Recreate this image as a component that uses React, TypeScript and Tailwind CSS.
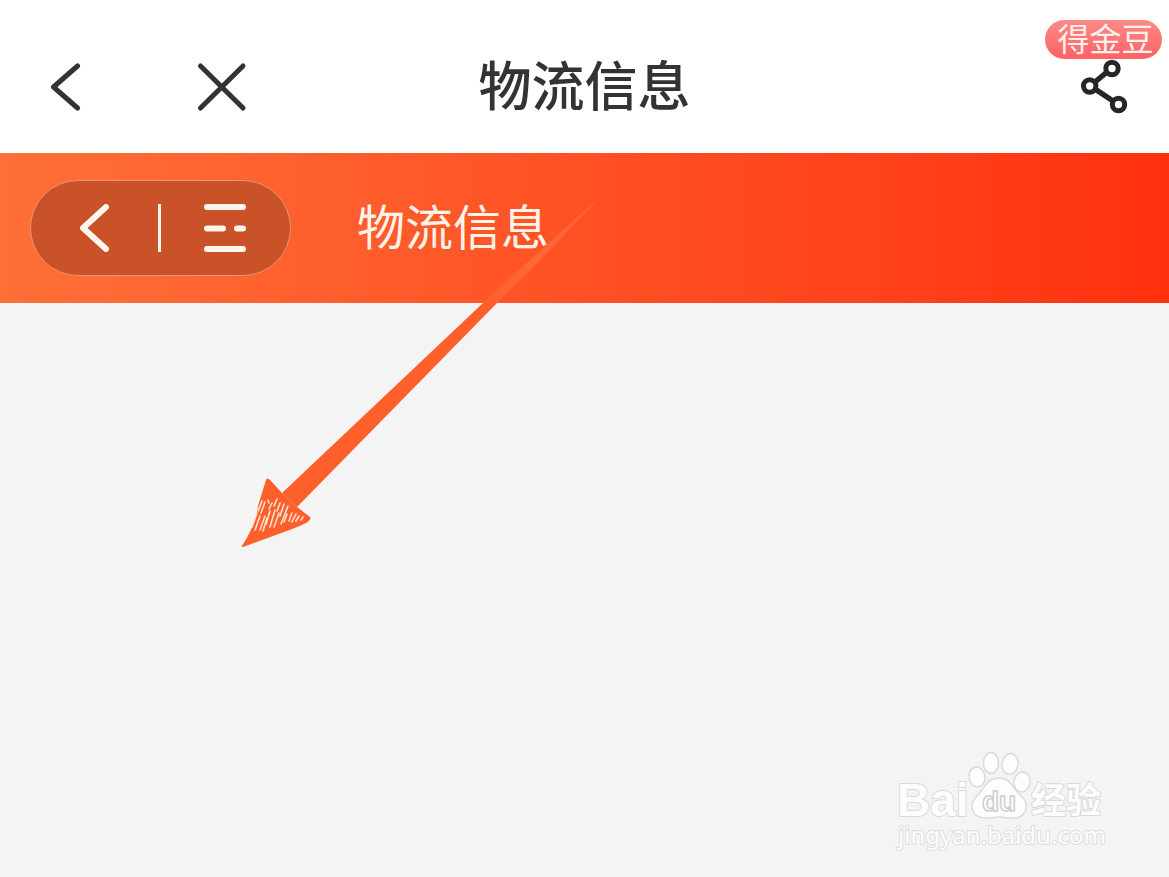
const CJK = "font-['Noto_Sans_CJK_SC',sans-serif]"

// hatch marks scratched into the arrow head: x1, y1, x2, y2
const hatches = [
  [28, 304, 29, 307],
  [22, 305, 18, 315],
  [25, 306, 21, 317],
  [32, 307, 29, 313],
  [37, 303, 34, 310],
  [40, 307, 37, 315],
  [17, 317, 12, 331],
  [20, 320, 15, 334],
  [25, 320, 20, 334],
  [30, 315, 26, 328],
  [27, 322, 23, 335],
  [35, 314, 30, 331],
  [39, 317, 34, 331],
  [44, 308, 40, 320],
  [48, 310, 41, 328],
  [47, 318, 44, 326],
  [52, 317, 49, 325],
  [56, 318, 52, 326],
  [59, 320, 56, 325],
  [63, 321, 61, 324],
]

export default function App() {
  return (
    <div className="relative min-h-screen overflow-hidden bg-[#f4f4f4]">
      <Header />
      <MiniProgramBar />
      <Arrow />
      <Watermark />
    </div>
  )
}

function Header() {
  return (
    <header className="grid h-[153px] grid-cols-3 items-center bg-white pt-5 text-[#333]">
      <div className="flex items-center gap-[108px] pl-10">
        <button type="button" aria-label="返回">
          <svg className="h-12 w-12" viewBox="0 0 48 48" fill="none" stroke="currentColor" strokeWidth="5" strokeLinecap="round">
            <path d="M37.5 3L13.5 24L37.5 45" strokeLinejoin="round" />
          </svg>
        </button>
        <button type="button" aria-label="关闭">
          <svg className="h-12 w-12 overflow-visible" viewBox="0 0 48 48" fill="none" stroke="currentColor" strokeWidth="5" strokeLinecap="round">
            <path d="M4.5 3L47 45M47 3L4.5 45" />
          </svg>
        </button>
      </div>
      <h1 className={`${CJK} pb-2 text-center text-[53px] leading-[60px] font-medium whitespace-nowrap`}>物流信息</h1>
      <div className="flex justify-end pr-10">
        <div className="relative">
          <button type="button" aria-label="分享" className="block text-[#262626]">
            <svg className="h-14 w-12" viewBox="0 0 48 56" fill="none" stroke="currentColor" strokeWidth="5">
              <path d="M26 13L14 23M14 30L32 42" strokeWidth="5.5" />
              <circle cx="31" cy="9.5" r="6.2" fill="white" />
              <circle cx="8.7" cy="27" r="6.2" fill="white" />
              <circle cx="37.500" cy="45.500" r="6.2" fill="white" />
            </svg>
          </button>
          <span
            className={`${CJK} absolute -right-[33px] bottom-full flex h-[39px] w-[117px] items-center justify-center rounded-full bg-linear-to-b from-[#fb8a86] to-[#fd6166] pb-1 pl-1 text-[32px] leading-none whitespace-nowrap text-[#fff0ec]`}
          >
            得金豆
          </span>
        </div>
      </div>
    </header>
  )
}

function MiniProgramBar() {
  return (
    <div className="flex h-[150px] items-center bg-linear-to-r from-[#ff6f38] via-[#ff5024] to-[#ff300e] pl-[30px]">
      <div className="flex h-24 w-[261px] items-center justify-between rounded-full border border-[#ea9573] bg-[#c95228] pr-11 pl-[43px] text-[#fff6ee]">
        <button type="button" aria-label="上一页">
          <svg className="h-12 w-10" viewBox="0 0 40 48" fill="none" stroke="currentColor" strokeWidth="6">
            <path d="M32 3L9 24L32 45" strokeLinecap="round" strokeLinejoin="round" />
          </svg>
        </button>
        <span className="h-12 w-[3px] bg-[#fff6ee]" />
        <button type="button" aria-label="菜单">
          <svg className="h-12 w-[42px]" viewBox="0 0 42 48" fill="none" stroke="currentColor" strokeWidth="6" strokeLinecap="round">
            <path d="M3 3H39M3 24.5H19M33 24.5H39M3 45H39" />
          </svg>
        </button>
      </div>
      <h2 className={`${CJK} ml-[66px] pb-2 text-[48px] leading-[60px] whitespace-nowrap text-[#fff2e8]`}>物流信息</h2>
    </div>
  )
}

function Arrow() {
  return (
    <svg
      className="pointer-events-none absolute top-[196px] left-60 h-[352px] w-[362px]"
      viewBox="0 0 362 352"
      aria-hidden="true"
    >
      <defs>
        <linearGradient id="shaft" gradientUnits="userSpaceOnUse" x1="360" y1="1" x2="250" y2="108">
          <stop offset="0" stopColor="#ff6d40" stopOpacity="0.6" />
          <stop offset="0.6" stopColor="#ff6836" />
          <stop offset="1" stopColor="#ff602b" />
        </linearGradient>
      </defs>
      <path d="M360 1Q305 50 243 107L42 297L57 311L257 107Q315 50 360 1Z" fill="url(#shaft)" />
      <path
        d="M1.500 350.500Q15 331 18 310L26 284Q27 281 30 284L42 297L57 311L70 321Q72 324 64 328Q56 332 33 340L3 351Z"
        fill="#ff602b"
      />
      <g stroke="#ffe0cc" strokeWidth="1.6" strokeLinecap="round">
        {hatches.map(([x1, y1, x2, y2]) => (
          <line key={`${x1}-${y1}`} x1={x1} y1={y1} x2={x2} y2={y2} />
        ))}
      </g>
    </svg>
  )
}

function Watermark() {
  return (
    <a href="#" className="absolute right-[60px] bottom-7 flex w-[212px] flex-col">
      <svg className="h-[72px] w-[212px] overflow-visible" viewBox="0 0 212 72" fill="#fdfdfd" stroke="#dadada" strokeWidth="2">
        <g fontWeight="700" style={{ paintOrder: "stroke" }}>
          <text x="0" y="67" fontSize="46" fontFamily="Liberation Sans, sans-serif">
            Bai
          </text>
          <text x="134" y="64" fontSize="35" fontFamily="Noto Sans CJK SC, sans-serif">
            经验
          </text>
        </g>
        <g strokeWidth="1.5">
          <ellipse cx="80" cy="28" rx="8" ry="10" transform="rotate(-10 80 28)" />
          <ellipse cx="94" cy="14" rx="7.5" ry="10.5" />
          <ellipse cx="113" cy="15" rx="8" ry="10.5" transform="rotate(10 113 15)" />
          <ellipse cx="125" cy="33" rx="8" ry="10" transform="rotate(10 125 33)" />
          <path d="M102 29C114 29 115 39 123 46C133 54 131 68 117 69C108 69 107 68 102 68C97 68 95 69 88 69C73 68 72 55 80 47C88 39 90 29 102 29Z" />
        </g>
        <text
          x="102"
          y="62"
          textAnchor="middle"
          fontSize="28"
          fontWeight="700"
          fontFamily="Liberation Sans, sans-serif"
          strokeWidth="1.5"
          stroke="#cfcfcf"
        >
          du
        </text>
      </svg>
      <span className="pl-px font-['Noto_Sans',sans-serif] text-[24px] leading-7 whitespace-nowrap text-[#fdfdfd] [paint-order:stroke] [-webkit-text-stroke:2px_#dedede]">
        jingyan.baidu.com
      </span>
    </a>
  )
}
